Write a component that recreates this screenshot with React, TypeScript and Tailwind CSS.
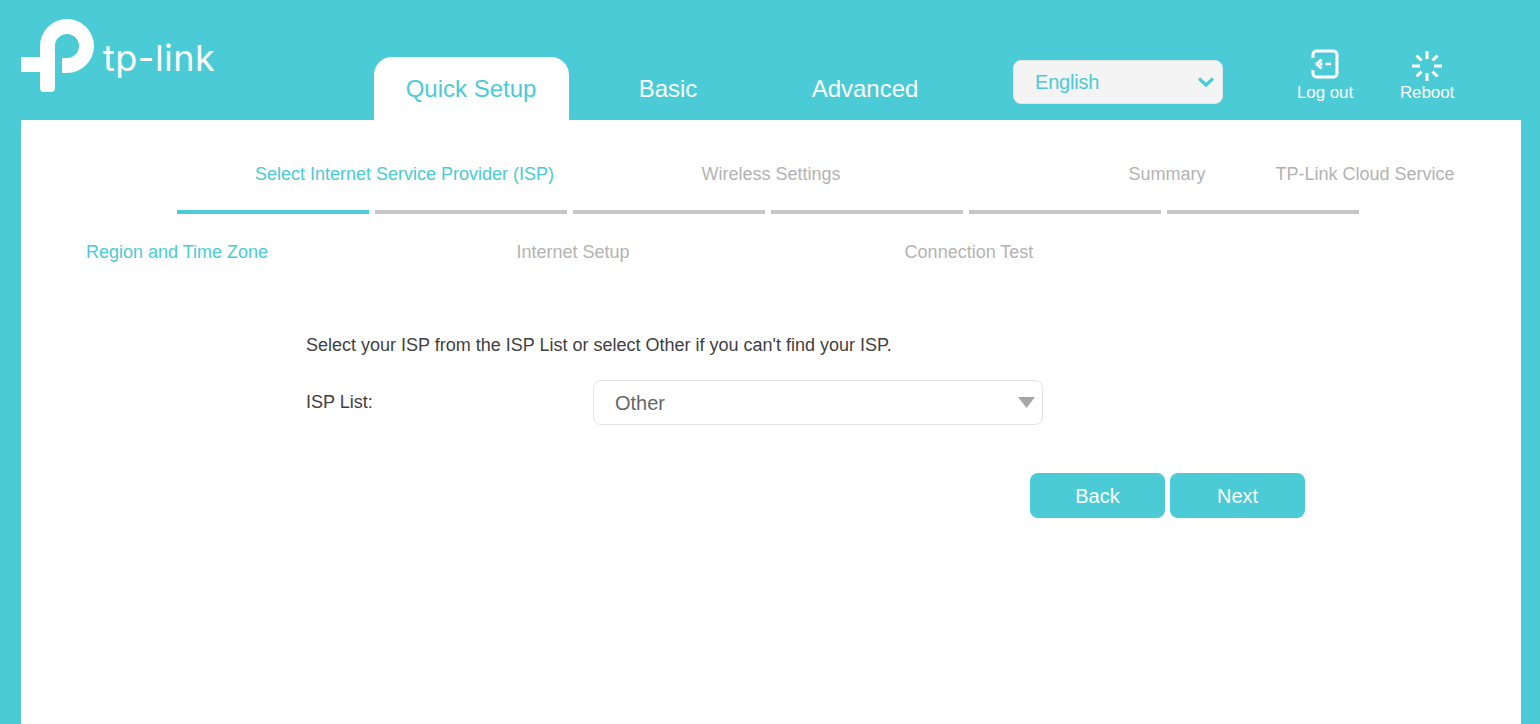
const TEAL = 'text-[#4acbd6]';

const steps = [0, 1, 2, 3, 4, 5];

function Logo() {
  return (
    <div className="flex items-start shrink-0 w-[374px] pl-[21px] pt-[18px]">
      <svg width="75" height="75" viewBox="21 18 75 75" fill="#fff" className="shrink-0">
        <path d="M21 57H40V46A27 27 0 1 1 67 73H62V58H67A12 12 0 1 0 55 46V88Q55 92 51 92H44Q40 92 40 88V72H21Z" />
      </svg>
      <span className="ml-[7px] mt-[17px] text-[36px] leading-[46px] text-white font-['Inter',sans-serif] font-normal tracking-[0.5px]">
        tp-link
      </span>
    </div>
  );
}

function LogoutIcon() {
  return (
    <svg width="30" height="30" viewBox="0 0 30 30" fill="none" stroke="#fff" strokeWidth="3" className="shrink-0">
      <path d="M3 9V5.500A3.500 3.500 0 0 1 6.500 2H23.500A3.500 3.500 0 0 1 27 5.500V24.500A3.500 3.500 0 0 1 23.500 28H6.500A3.500 3.500 0 0 1 3 24.500V21" />
      <path d="M11.500 10.500L7 15L11.500 19.500" strokeWidth="3" />
      <path d="M10 15H12.500M15.500 15H21" strokeWidth="2.600" />
    </svg>
  );
}

function RebootIcon() {
  return (
    <svg width="32" height="32" viewBox="-16 -16 32 32" stroke="#fff" strokeWidth="3" className="shrink-0">
      <path d="M0 -15V-7M0 7V15M-15 0H-7M7 0H15M-10.500 -10.500L-5.500 -5.500M5.500 5.500L10.500 10.500M10.500 -10.500L5.500 -5.500M-5.500 5.500L-10.500 10.500" />
    </svg>
  );
}

function Header() {
  return (
    <header className="flex h-[120px] shrink-0">
      <Logo />
      <nav className="flex items-end gap-[2px] text-[24px] leading-none">
        <div className={`flex h-[63px] w-[195px] items-center justify-center rounded-t-[18px] bg-white pr-[1px] ${TEAL}`}>
          Quick Setup
        </div>
        <div className="flex h-[63px] w-[195px] items-center justify-center pr-[1px] text-white">Basic</div>
        <div className="flex h-[63px] w-[195px] items-center justify-center pr-[1px] text-white">Advanced</div>
      </nav>
      <div className="ml-[50px] mt-[60px] flex h-[44px] w-[210px] items-center justify-between rounded-lg border border-[#e6e6e6] bg-[#f4f4f4] pl-[21px] pr-[7px]">
        <span className={`text-[20px] tracking-[-0.2px] ${TEAL}`}>English</span>
        <svg width="18" height="12" viewBox="0 0 18 12" fill="none" stroke="#4acbd6" strokeWidth="3.200">
          <path d="M2 2.500L9 9L16 2.500" />
        </svg>
      </div>
      <div className="ml-[70px] mt-[49px] flex w-[64px] flex-col items-center text-[17px] leading-[20px] text-white">
        <LogoutIcon />
        <span className="mt-[4px] whitespace-nowrap tracking-[-0.1px]">Log out</span>
      </div>
      <div className="ml-[38px] mt-[50px] flex w-[64px] flex-col items-center text-[17px] leading-[20px] text-white">
        <RebootIcon />
        <span className="mt-[1px] whitespace-nowrap tracking-[-0.1px]">Reboot</span>
      </div>
    </header>
  );
}

function StepLabel({ active, shift, children }: { active?: boolean; shift?: boolean; children: string }) {
  return (
    <div className={`flex justify-center whitespace-nowrap ${shift ? 'ml-[59px]' : ''} ${active ? TEAL : 'text-[#b3b3b3]'}`}>
      {children}
    </div>
  );
}

function Stepper() {
  return (
    <section className="ml-[57px] pt-[40px] text-[18px] leading-[28px]">
      <div className="grid w-[1386px] grid-cols-7">
        <div />
        <StepLabel active shift>Select Internet Service Provider (ISP)</StepLabel>
        <div />
        <StepLabel>Wireless Settings</StepLabel>
        <div />
        <StepLabel>Summary</StepLabel>
        <StepLabel>TP-Link Cloud Service</StepLabel>
      </div>
      <div className="ml-[99px] mt-[22px] flex gap-[6px]">
        {steps.map(i => (
          <div key={i} className={`h-[4px] w-[192px] ${i === 0 ? 'bg-[#4acbd6]' : 'bg-[#c7c7c9]'}`} />
        ))}
      </div>
      <div className="mt-[24px] grid w-[1386px] grid-cols-7">
        <StepLabel active>Region and Time Zone</StepLabel>
        <div />
        <StepLabel>Internet Setup</StepLabel>
        <div />
        <StepLabel>Connection Test</StepLabel>
      </div>
    </section>
  );
}

function IspForm() {
  return (
    <section className="ml-[285px] mt-[65px] w-[1000px] text-[18px] leading-[28px] text-[#3f3f3f]">
      <p>Select your ISP from the ISP List or select Other if you can't find your ISP.</p>
      <div className="mt-[21px] flex items-start">
        <label className="w-[287px] pt-[8px]">ISP List:</label>
        <div className="flex h-[45px] w-[450px] items-center justify-between rounded-lg border border-[#e4e4e4] bg-white pl-[21px] pr-[7px]">
          <span className="text-[20px] text-[#666666]">Other</span>
          <svg width="17" height="11" viewBox="0 0 17 11" fill="#a7a7a9" className="mb-[1px]">
            <path d="M0 0H17L8.500 11Z" />
          </svg>
        </div>
      </div>
      <div className="ml-[724px] mt-[48px] flex gap-[5px] text-[20px] text-white">
        <button className="h-[45px] w-[135px] rounded-lg bg-[#4acbd6]">Back</button>
        <button className="h-[45px] w-[135px] rounded-lg bg-[#4acbd6]">Next</button>
      </div>
    </section>
  );
}

export default function App() {
  return (
    <div className="flex h-screen flex-col overflow-hidden bg-[#4acbd6] font-['Liberation_Sans',Arial,sans-serif]">
      <Header />
      <main className="ml-[21px] mr-[19px] flex-1 bg-white">
        <Stepper />
        <IspForm />
      </main>
    </div>
  );
}
